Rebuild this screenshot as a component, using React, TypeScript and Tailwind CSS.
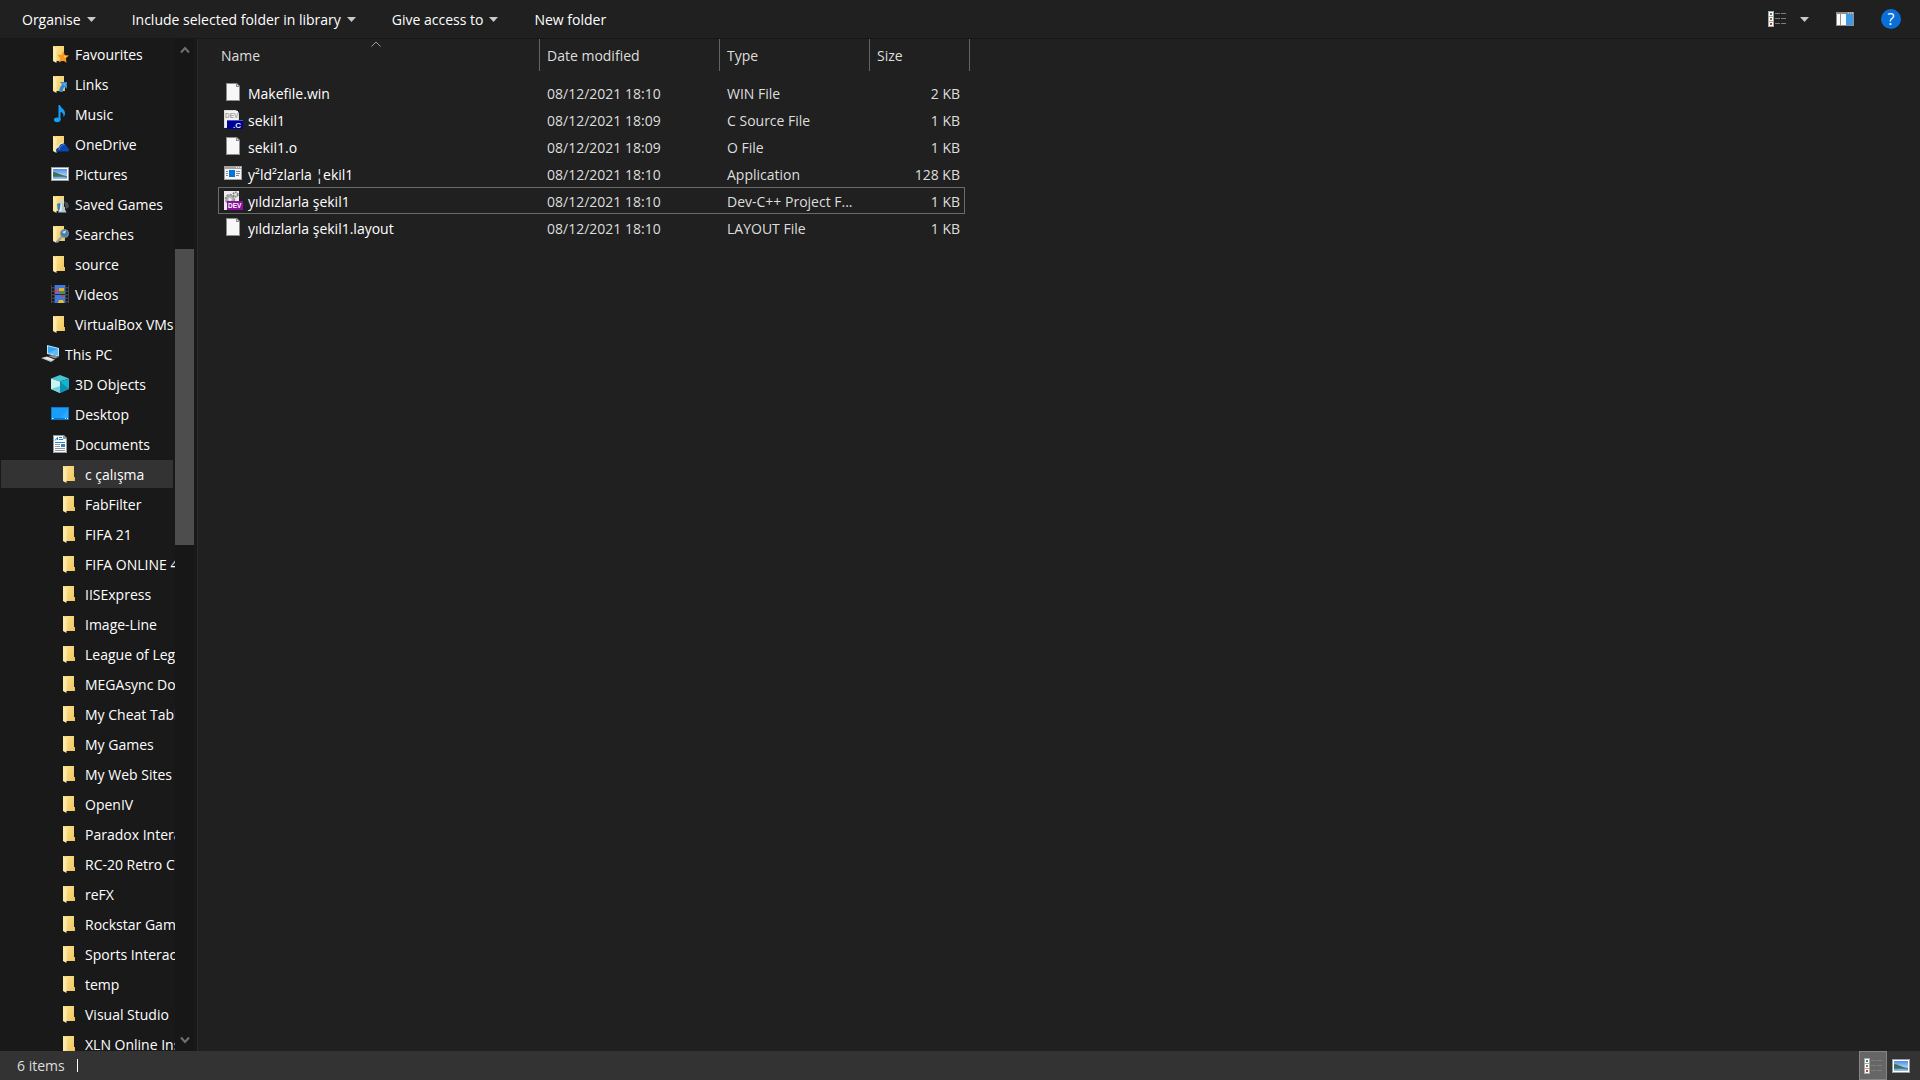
import React, { useState } from "react";

type IconName =
  | "folder" | "favourites" | "links" | "music" | "onedrive" | "pictures" | "games" | "searches"
  | "videos" | "pc" | "cube" | "desktop" | "documents" | "file" | "csource" | "app" | "dev";

function Folder() {
  return (
    <>
      <path d="M2 1h11v11l1 1v3H6L2 14z" fill="#f3cf6b" />
      <path d="M5 1h8v15H5z" fill="url(#folderBack)" />
      <path d="M13 12h1v4h-1z" fill="#e9bf55" />
      <path d="M2 1l3.5 2v15L2 16z" fill="#ffe9a6" />
    </>
  );
}

function Picture() {
  return (
    <>
      <rect x="0" y="2" width="18" height="14" fill="#9d9d9d" />
      <rect x="1" y="3" width="16" height="12" fill="#fff" />
      <rect x="2" y="4" width="14" height="10" fill="url(#sky)" />
      <path d="M2 7c4 0 6 3 14 4v1H2z" fill="#3f6f5a" />
      <path d="M2 11.5h14V14H2z" fill="#5d94c4" />
      <path d="M2 12.5c5 0 8-1 14 .5V14H2z" fill="#8fc0e0" />
    </>
  );
}

function Page() {
  return (
    <>
      <path d="M2 0h11l3 3v15H2z" fill="#8c8c8c" />
      <path d="M3 1h9v3h3v13H3z" fill="#f7f7f7" />
      <path d="M13 1.5V3h1.5z" fill="#e8e8e8" />
    </>
  );
}

const drawings: Record<IconName, React.ReactNode> = {
  folder: <Folder />,
  favourites: (
    <>
      <Folder />
      <path d="M12.3 6l1.5 4 4.2.6-3.2 2.7.8 4.5-3.7-2.3-4.2 2 1.6-4.3L6.5 10l4.2-.2z" fill="#f79a1e" />
      <path d="M12.3 8l1 3 2.7.4-2.3 1.6z" fill="#ffd35a" />
    </>
  ),
  links: (
    <>
      <Folder />
      <path d="M9 7h7v7l-2.2-2.2C12 13.5 11.5 15 12 17H8.5C8 14 9 12 11.2 9.2z" fill="#2f86d2" />
      <path d="M10.5 8H15v4.5z" fill="#4fa3e6" />
    </>
  ),
  music: (
    <>
      <path d="M7.5 0H9c.5 3 5 4 5 8 0 2-.6 3.2-1.5 4 .4-3-1-4.5-3-5v8h-2z" fill="#14a0fa" />
      <ellipse cx="6.2" cy="14.8" rx="3.3" ry="2.4" fill="#14a0fa" />
    </>
  ),
  onedrive: (
    <>
      <Folder />
      <path d="M5 15.5c0-2 1.5-3 3-3 .2-3 3-5 6-3.5l4 5.2c.5 1.5-.3 2.3-1.5 2.3h-10c-.9 0-1.500-.3-1.500-1z" fill="#0a47b0" />
      <path d="M5.5 13.5C6.5 10 9.5 8 12 8" stroke="#e9eefc" strokeWidth="1" fill="none" />
      <path d="M8 15c.5-3.5 3-5.5 5.5-5.5" stroke="#6f9be8" strokeWidth=".7" fill="none" />
    </>
  ),
  pictures: <Picture />,
  games: (
    <>
      <Folder />
      <path d="M13 6l4 2 1 4-3 2z" fill="#4b5056" />
      <path d="M6 9l3-1 2 7-4 1z" fill="#2f83c4" />
      <circle cx="11" cy="6.5" r="2" fill="#c9d9e2" />
      <path d="M9.5 8.5h3l1 5 2 4H7l2-4z" fill="#b4c8d3" />
      <path d="M10 9h1l-.5 7h-2z" fill="#e7eff3" />
    </>
  ),
  searches: (
    <>
      <Folder />
      <path d="M11.5 11l-5 5.5" stroke="#8fa3b3" strokeWidth="2.2" strokeLinecap="round" />
      <circle cx="13.5" cy="8.5" r="4" fill="#4b7ea4" stroke="#7f98a8" strokeWidth="1" />
      <path d="M11.5 8c.5-2 2-2.5 3.5-2l-1 2.5z" fill="#bfe0f2" />
    </>
  ),
  videos: (
    <>
      <rect x="0" y="0" width="18" height="18" fill="#454545" />
      <path d="M2 0v18M16 0v18" stroke="#111" strokeWidth="2" strokeDasharray="2 1.5" />
      <rect x="4" y="0" width="10" height="18" fill="#3d78dd" />
      <path d="M4 4.5h4V8H4z" fill="#c64b74" />
      <path d="M8 3h5v3H8z" fill="#e9b021" />
      <path d="M9 6h5v2.5H9z" fill="#3d9a3f" />
      <path d="M4 9h10v1H4z" fill="#1f2f58" />
      <path d="M10 10h3v2h-3z" fill="#d6452b" />
      <path d="M8 15h4l1 3H7z" fill="#e5c22d" />
    </>
  ),
  pc: (
    <>
      <path d="M6 0l12 3v8.500L6 9z" fill="#bfe4fb" />
      <path d="M7 1.3l10 2.500v6.500L7 8z" fill="#35a3f3" />
      <path d="M7 8l10-4.200v6.500z" fill="#5fbaf8" />
      <path d="M7 11l5-1 6 2-4 1.500z" fill="#8b8f95" />
      <path d="M0 13l6-1.500 8 3L10 17z" fill="#c4c7cc" />
      <path d="M2 13l4-1 6 2.300-2 1z" fill="#e9eaee" />
    </>
  ),
  cube: (
    <>
      <path d="M9 0l9 3.5-9 3-9-3z" fill="#48c5d0" />
      <path d="M0 3.5l9 3V18l-9-4z" fill="#c9f4f4" />
      <path d="M18 3.5l-9 3V18l9-4z" fill="#16b0d0" />
      <path d="M9 6.5l9 7.5-9 4z" fill="#0b8fb2" />
      <path d="M0 14l9-3v7z" fill="#6fd3d8" />
    </>
  ),
  desktop: (
    <>
      <rect x="0" y="2" width="18" height="13" fill="#0b79c9" />
      <rect x="1" y="3" width="16" height="10" fill="#1b9dfb" />
      <path d="M1 13h9l7-9v9z" fill="#30a9ff" />
      <path d="M1 13.5h1.5M14 13.5h1M16 13.5h1" stroke="#dff1ff" />
    </>
  ),
  documents: (
    <>
      <path d="M2 0h11l3 3v15H2z" fill="#9a9a9a" />
      <path d="M3 1h9v3h3v13H3z" fill="#fbfbfb" />
      <path d="M4 5.5l2.5-3V5M8 2.5h3M8 4.5h4M4 7.5h10" stroke="#1c86d1" fill="none" />
      <path d="M4 9.5h5M4 11.5h5M4 13.5h10M4 15.5h10" stroke="#8e98a3" />
      <rect x="10" y="9" width="4" height="3" fill="#3b7fb8" />
    </>
  ),
  file: <Page />,
  csource: (
    <>
      <path d="M0 0h12l3 3v15H0z" fill="#dcdcdc" />
      <path d="M1 1h13v16H1z" fill="#f4f4f4" />
      <text x="1" y="8" fontSize="6.5" fontWeight="700" fontFamily="Liberation Sans, sans-serif" fill="#a0a0a0">DEV</text>
      <rect x="3" y="11" width="16" height="8" fill="#000094" />
      <path d="M3 10.5h16" stroke="#4a59c8" />
      <text x="9" y="17.5" fontSize="8" fontWeight="700" fontFamily="Liberation Sans, sans-serif" fill="#e8ecff">.C</text>
    </>
  ),
  app: (
    <>
      <rect x="0" y="2" width="18" height="14" fill="#a2a2a2" />
      <rect x="1" y="5" width="16" height="10" fill="#f6f6f6" />
      <path d="M12 3.5h1M14 3.5h1M16 3.5h1" stroke="#eee" />
      <rect x="5" y="6" width="6" height="7" fill="#0a74d6" />
      <path d="M2 7.5h2M2 9.5h2M2 11.5h2M12 7.5h4M12 9.5h4M12 11.5h3" stroke="#8a8a8a" />
    </>
  ),
  dev: (
    <>
      <path d="M0 0h15v19H0z" fill="#ededed" />
      <circle cx="6" cy="8" r="4" fill="none" stroke="#8b8b8b" strokeWidth="2.5" strokeDasharray="2 1" />
      <circle cx="6" cy="8" r="3.5" fill="#b9b9b9" stroke="#9c9c9c" strokeWidth="1.5" />
      <circle cx="6" cy="8.5" r="1.5" fill="#ededed" />
      <circle cx="11.5" cy="3.5" r="2.2" fill="none" stroke="#7b7b7b" strokeWidth="1.8" strokeDasharray="1.5 .7" />
      <rect x="3" y="10" width="16" height="9" fill="#8a129c" />
      <text x="4" y="17" fontSize="6.5" fontWeight="700" fontFamily="Liberation Sans, sans-serif" fill="#fff">DEV</text>
    </>
  ),
};

function Icon({ name }: { name: IconName }) {
  const large = name === "csource" || name === "dev";
  return (
    <svg
      className={large ? "h-[19px] w-[19px] shrink-0" : "h-[18px] w-[18px] shrink-0"}
      viewBox={large ? "0 0 19 19" : "0 0 18 18"}
      aria-hidden="true"
    >
      {drawings[name]}
    </svg>
  );
}

function DetailsGlyph({ line }: { line: string }) {
  return (
    <svg className="h-4 w-[18px]" viewBox="0 0 18 16" aria-hidden="true">
      <path d="M0 0h6v16H0z" fill="#a8a8a8" />
      <path d="M1 1h4v4H1zM1 6h4v4H1zM1 11h4v4H1z" fill="#fff" />
      <path d="M2 2h2v2H2z" fill="#3f7f97" />
      <path d="M2 7h2v2H2z" fill="#8a7a3d" />
      <path d="M2 12h2v2H2z" fill="#b8492f" />
      <path d="M7 2.5h5M13 2.5h5M7 7.5h5M13 7.5h5M7 12.5h5M13 12.5h5" stroke={line} />
    </svg>
  );
}

function Caret() {
  return (
    <svg className="h-[5px] w-[9px]" viewBox="0 0 9 5" aria-hidden="true">
      <path d="M0 0h9L4.5 5z" fill="#c9c9c9" />
    </svg>
  );
}

const nav: { label: string; icon: IconName; level: 0 | 1 | 2 }[] = [
  { label: "Favourites", icon: "favourites", level: 1 },
  { label: "Links", icon: "links", level: 1 },
  { label: "Music", icon: "music", level: 1 },
  { label: "OneDrive", icon: "onedrive", level: 1 },
  { label: "Pictures", icon: "pictures", level: 1 },
  { label: "Saved Games", icon: "games", level: 1 },
  { label: "Searches", icon: "searches", level: 1 },
  { label: "source", icon: "folder", level: 1 },
  { label: "Videos", icon: "videos", level: 1 },
  { label: "VirtualBox VMs", icon: "folder", level: 1 },
  { label: "This PC", icon: "pc", level: 0 },
  { label: "3D Objects", icon: "cube", level: 1 },
  { label: "Desktop", icon: "desktop", level: 1 },
  { label: "Documents", icon: "documents", level: 1 },
  { label: "c çalışma", icon: "folder", level: 2 },
  { label: "FabFilter", icon: "folder", level: 2 },
  { label: "FIFA 21", icon: "folder", level: 2 },
  { label: "FIFA ONLINE 4", icon: "folder", level: 2 },
  { label: "IISExpress", icon: "folder", level: 2 },
  { label: "Image-Line", icon: "folder", level: 2 },
  { label: "League of Legends", icon: "folder", level: 2 },
  { label: "MEGAsync Downloads", icon: "folder", level: 2 },
  { label: "My Cheat Tables", icon: "folder", level: 2 },
  { label: "My Games", icon: "folder", level: 2 },
  { label: "My Web Sites", icon: "folder", level: 2 },
  { label: "OpenIV", icon: "folder", level: 2 },
  { label: "Paradox Interactive", icon: "folder", level: 2 },
  { label: "RC-20 Retro Color", icon: "folder", level: 2 },
  { label: "reFX", icon: "folder", level: 2 },
  { label: "Rockstar Games", icon: "folder", level: 2 },
  { label: "Sports Interactive", icon: "folder", level: 2 },
  { label: "temp", icon: "folder", level: 2 },
  { label: "Visual Studio", icon: "folder", level: 2 },
  { label: "XLN Online Installer", icon: "folder", level: 2 },
];

const indent = ["pl-10", "pl-[50px]", "pl-[60px]"];

const files: { name: string; icon: IconName; date: string; type: string; size: string }[] = [
  { name: "Makefile.win", icon: "file", date: "08/12/2021 18:10", type: "WIN File", size: "2 KB" },
  { name: "sekil1", icon: "csource", date: "08/12/2021 18:09", type: "C Source File", size: "1 KB" },
  { name: "sekil1.o", icon: "file", date: "08/12/2021 18:09", type: "O File", size: "1 KB" },
  { name: "y²ld²zlarla ¦ekil1", icon: "app", date: "08/12/2021 18:10", type: "Application", size: "128 KB" },
  { name: "yıldızlarla şekil1", icon: "dev", date: "08/12/2021 18:10", type: "Dev-C++ Project F...", size: "1 KB" },
  { name: "yıldızlarla şekil1.layout", icon: "file", date: "08/12/2021 18:10", type: "LAYOUT File", size: "1 KB" },
];

const commands = [
  { label: "Organise", menu: true },
  { label: "Include selected folder in library", menu: true },
  { label: "Give access to", menu: true },
  { label: "New folder", menu: false },
];

function Toolbar() {
  return (
    <header className="flex h-[39px] shrink-0 items-center justify-between border-b border-[#171717] pr-[19px] pl-[22px] text-white">
      <div className="flex items-center gap-9">
        {commands.map((command) => (
          <button key={command.label} className="flex items-center gap-1.5">
            <span className="pt-0.5">{command.label}</span>
            {command.menu && <Caret />}
          </button>
        ))}
      </div>
      <div className="flex items-center gap-[27px]">
        <div className="flex items-center gap-[14px]">
          <button aria-label="Change view"><DetailsGlyph line="#7c7c7c" /></button>
          <button aria-label="More view options"><Caret /></button>
        </div>
        <button aria-label="Preview pane">
          <svg className="h-[14px] w-[18px]" viewBox="0 0 18 14" aria-hidden="true">
            <path d="M0 0h18v14H0z" fill="#8f8f8f" />
            <path d="M1 2h3v11H1zM5 2h5v11H5z" fill="#fbfbfb" />
            <path d="M10 2h7v11h-7z" fill="#3f9be6" />
            <path d="M12 1h1M14 1h1M16 1h1" stroke="#e4e4e4" />
          </svg>
        </button>
        <button aria-label="Help" className="flex h-5 w-5 items-center justify-center rounded-full bg-[#0a6fd8] text-base leading-none font-medium text-white">
          ?
        </button>
      </div>
    </header>
  );
}

function Sidebar() {
  const [current, setCurrent] = useState("c çalışma");
  return (
    <aside className="flex w-[198px] shrink-0 border-r border-[#2b2b2b] bg-[#191919] text-white">
      <nav className="min-w-0 flex-1 overflow-hidden" aria-label="Folders">
        <ul>
          {nav.map((item) => (
            <li key={item.label} className="h-[30px] py-px pl-px">
              <button
                onClick={() => setCurrent(item.label)}
                className={`flex h-7 w-[172px] items-center gap-1.5 whitespace-nowrap ${indent[item.level]} ${
                  item.label === current ? "bg-[#333333]" : ""
                }`}
              >
                <Icon name={item.icon} />
                <span className="pt-0.5">{item.label}</span>
              </button>
            </li>
          ))}
        </ul>
      </nav>
      <div className="mr-[3px] flex w-[19px] flex-col items-center bg-[#171717]">
        <button aria-label="Scroll up" className="flex h-[22px] w-full items-center justify-center">
          <svg className="h-2 w-[10px]" viewBox="0 0 10 8" aria-hidden="true">
            <path d="M1 6.5L5 2l4 4.500" stroke="#707070" strokeWidth="2" fill="none" />
          </svg>
        </button>
        <div className="flex w-full flex-1 flex-col">
          <div className="flex-[188]" />
          <div className="flex-[296] bg-[#4d4d4d]" />
          <div className="flex-[484]" />
        </div>
        <button aria-label="Scroll down" className="flex h-[22px] w-full items-center justify-center">
          <svg className="h-2 w-[10px]" viewBox="0 0 10 8" aria-hidden="true">
            <path d="M1 1.5L5 6l4-4.500" stroke="#707070" strokeWidth="2" fill="none" />
          </svg>
        </button>
      </div>
    </aside>
  );
}

function FileList() {
  const [focused, setFocused] = useState("yıldızlarla şekil1");
  const heading = "relative border-r border-[#636363] pt-0.5 font-normal";
  return (
    <main className="min-w-0 flex-1 overflow-hidden pl-5">
      <table className="w-[752px] table-fixed border-separate border-spacing-0 text-left text-[#dedede]">
        <colgroup>
          <col className="w-[322px]" />
          <col className="w-[180px]" />
          <col className="w-[150px]" />
          <col className="w-[95px]" />
          <col className="w-[5px]" />
        </colgroup>
        <thead>
          <tr className="h-8">
            <th className={`${heading} pl-[3px]`}>
              Name
              <svg className="absolute top-0.5 left-[153px] h-[6px] w-[10px]" viewBox="0 0 10 6" aria-hidden="true">
                <path d="M.5 5.5L5 1l4.500 4.500" stroke="#a0a0a0" fill="none" />
              </svg>
            </th>
            <th className={`${heading} pl-[7px]`}>Date modified</th>
            <th className={`${heading} pl-[7px]`}>Type</th>
            <th colSpan={2} className={`${heading} pl-[7px]`}>Size</th>
          </tr>
        </thead>
        <tbody>
          <tr className="h-2" aria-hidden="true"><td colSpan={5} /></tr>
          {files.map((file) => {
            const edge = file.name === focused ? "border-[#6b6b6b]" : "border-transparent";
            return (
              <tr key={file.name} className="h-[27px] whitespace-nowrap" onClick={() => setFocused(file.name)}>
                <td className={`border-y border-l ${edge} pl-1 text-white`}>
                  <div className="flex items-center">
                    <span className="flex w-[25px] items-center pb-px pl-px">
                      <Icon name={file.icon} />
                    </span>
                    <span className="pt-0.5">{file.name}</span>
                  </div>
                </td>
                <td className={`border-y ${edge} pt-0.5 pl-[7px]`}>{file.date}</td>
                <td className={`border-y ${edge} pt-0.5 pl-[7px]`}>{file.type}</td>
                <td className={`border-y border-r ${edge} pt-0.5 pr-1 text-right`}>{file.size}</td>
                <td />
              </tr>
            );
          })}
        </tbody>
      </table>
    </main>
  );
}

function StatusBar() {
  return (
    <footer className="flex h-[29px] shrink-0 items-center justify-between bg-[#333333] pl-[17px]">
      <div className="flex items-center gap-3 text-[#dedede]">
        <span className="pt-px">6 items</span>
        <span className="h-[13px] w-px bg-white" />
      </div>
      <div className="flex h-full items-center pr-[10px]">
        <button aria-label="Details view" className="flex h-full w-7 items-center justify-center border border-[#858585] bg-[#666666]">
          <DetailsGlyph line="#7d7d7d" />
        </button>
        <button aria-label="Large icons view" className="ml-[5px]">
          <Icon name="pictures" />
        </button>
      </div>
    </footer>
  );
}

export default function App() {
  return (
    <div className="flex h-screen flex-col overflow-hidden bg-[#202020] font-['Open_Sans','Noto_Sans',sans-serif] text-sm leading-5">
      <svg className="absolute h-0 w-0" aria-hidden="true">
        <defs>
          <linearGradient id="folderBack" x1="0" y1="0" x2="1" y2="1">
            <stop offset="0" stopColor="#fbe08e" />
            <stop offset="1" stopColor="#f0c75e" />
          </linearGradient>
          <linearGradient id="sky" x1="0" y1="0" x2="0" y2="1">
            <stop offset="0" stopColor="#4d8fe8" />
            <stop offset="1" stopColor="#e6f3fb" />
          </linearGradient>
        </defs>
      </svg>
      <Toolbar />
      <div className="flex min-h-0 flex-1">
        <Sidebar />
        <FileList />
      </div>
      <StatusBar />
    </div>
  );
}
